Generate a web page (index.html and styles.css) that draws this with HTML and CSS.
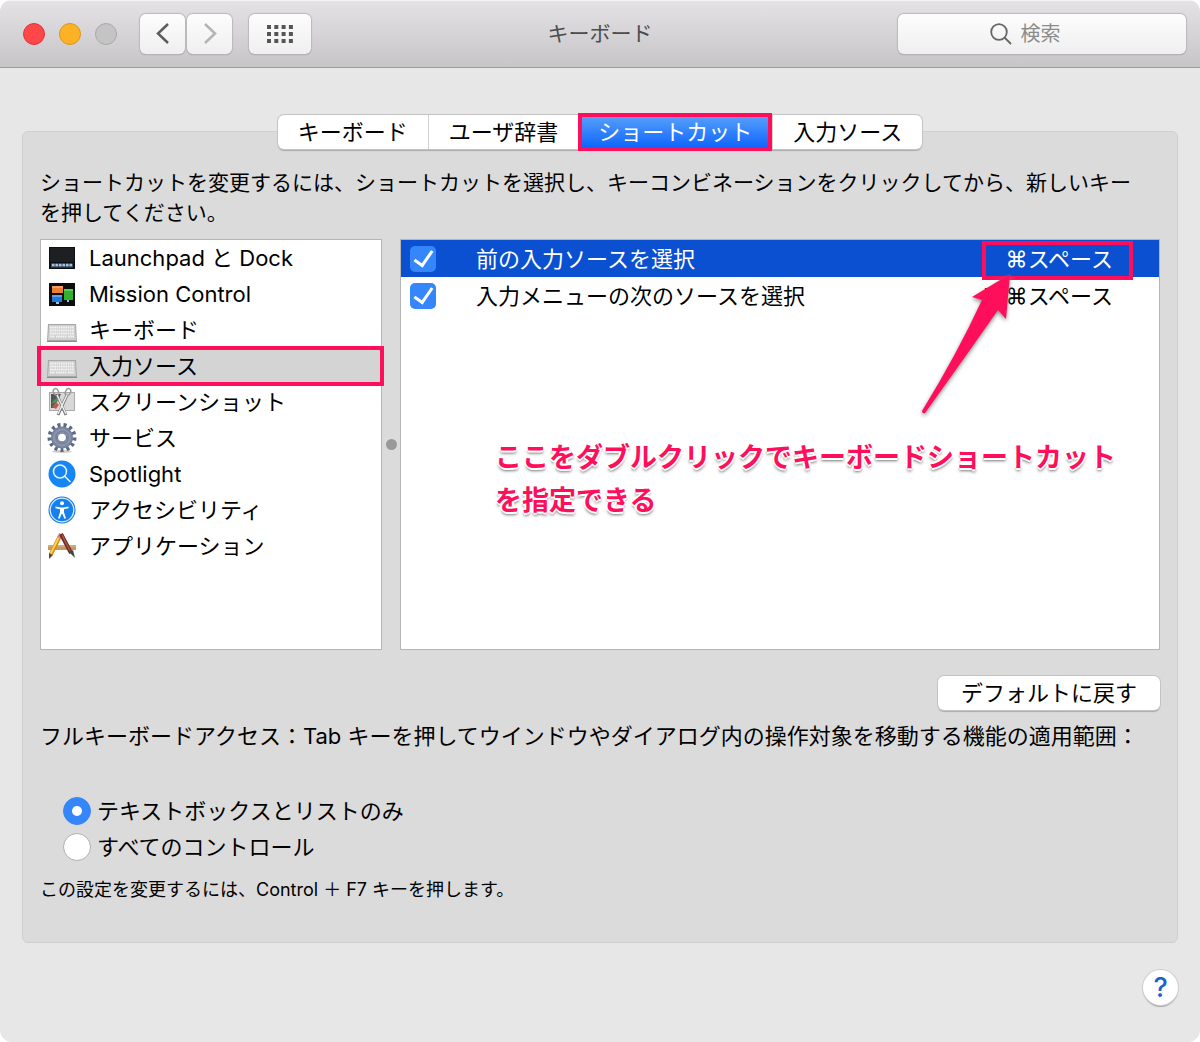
FILE: index.html
```html
<!DOCTYPE html>
<html lang="ja">
  <head>
    <meta charset="utf-8">
    <title>キーボード</title>
    <link rel="stylesheet" href="styles.css">
  </head>
  <body>
    <div class="window">
      <header class="toolbar">
        <div class="toolbar-left">
          <div class="lights">
            <button class="light red" aria-label="閉じる"></button>
            <button class="light yellow" aria-label="しまう"></button>
            <button class="light" aria-label="拡大" disabled></button>
          </div>
          <div class="nav">
            <button class="tool-btn" aria-label="戻る">
              <svg width="16" height="24" viewBox="0 0 16 24"><path d="M13 2 L3 11.500 L13 21" fill="none" stroke="#5c5c5c" stroke-width="2.500"/></svg>
            </button>
            <button class="tool-btn" aria-label="進む">
              <svg width="16" height="24" viewBox="0 0 16 24"><path d="M3 2 L13 11.500 L3 21" fill="none" stroke="#b4b4b4" stroke-width="2.500"/></svg>
            </button>
          </div>
          <button class="tool-btn grid-btn" aria-label="すべてを表示">
            <svg width="26" height="20" viewBox="0 0 26 20"><path d="M0 3h26M0 10h26M0 17h26" stroke="#555" stroke-width="4" stroke-dasharray="4 3.300"/></svg>
          </button>
        </div>
        <h1>キーボード</h1>
        <label class="search">
          <svg width="22" height="22" viewBox="0 0 22 22"><g fill="none" stroke="#666" stroke-width="1.800"><circle cx="9" cy="9" r="7.800"/><path d="M14.500 14.500 L21 21"/></g></svg>
          <input type="text" placeholder="検索" aria-label="検索">
        </label>
      </header>

      <main>
        <nav class="tabs">
          <button class="tab">キーボード</button>
          <button class="tab">ユーザ辞書</button>
          <button class="tab active marked">ショートカット</button>
          <button class="tab">入力ソース</button>
        </nav>

        <section class="panel">
          <p class="text">ショートカットを変更するには、ショートカットを選択し、キーコンビネーションをクリックしてから、新しいキー<br>を押してください。</p>

          <div class="panes">
            <ul class="pane categories">
              <li><button class="category">
                <svg class="icon" viewBox="0 0 30 30"><rect x="2" y="4" width="26" height="22" fill="#0d1116"/><rect x="3" y="5" width="24" height="14" fill="#1d1f22"/><path d="M4 22.500h22" stroke="#3c5166" stroke-width="4"/><path d="M5 22h20" stroke="#a3c4dc" stroke-width="2.500" stroke-dasharray="2.500 1"/></svg>
                Launchpad と Dock</button></li>
              <li><button class="category">
                <svg class="icon" viewBox="0 0 30 30"><rect x="2" y="4" width="26" height="23" fill="#0b0d0f"/><rect x="5" y="7" width="11" height="7" fill="#f07b32"/><path d="M5 8h11" stroke="#ffc09a"/><rect x="5" y="16" width="10" height="7" fill="#2478da"/><path d="M5 17h10" stroke="#9dcaf5"/><rect x="17" y="10" width="9" height="11" fill="#2fb22d"/><path d="M17 11h9" stroke="#8be787"/><path d="M9 23h3v2h-3zM20 21h2v2h-2z" fill="#8fc4e8"/></svg>
                Mission Control</button></li>
              <li><button class="category">
                <svg class="icon" viewBox="0 0 30 30"><path d="M1 9h28l1 18H0z" fill="#a6a6a6"/><path d="M2 10h26l1 15H1z" fill="#cfcfcf"/><path d="M3 12.500h24M3 15.500h24M3 18.500h24M3 21.500h5m1 0h11m1 0h6" stroke="#f4f4f4" stroke-width="2" stroke-dasharray="1.600 .6"/><path d="M0 26.500h30" stroke="#8c8c8c"/></svg>
                キーボード</button></li>
              <li><button class="category selected marked">
                <svg class="icon" viewBox="0 0 30 30"><path d="M1 9h28l1 18H0z" fill="#a6a6a6"/><path d="M2 10h26l1 15H1z" fill="#cfcfcf"/><path d="M3 12.500h24M3 15.500h24M3 18.500h24M3 21.500h5m1 0h11m1 0h6" stroke="#f4f4f4" stroke-width="2" stroke-dasharray="1.600 .6"/><path d="M0 26.500h30" stroke="#8c8c8c"/></svg>
                入力ソース</button></li>
              <li><button class="category">
                <svg class="icon" viewBox="0 0 30 30"><rect x="2.500" y="5.500" width="25" height="18" fill="#d8d8d8" stroke="#aaa"/><path d="M4 7h10L7 21H4z" fill="#555"/><path d="M4 17q4-7 9-6l-4 4z" fill="#4c9a58"/><path d="M5 20l4-5 3 3-3 4z" fill="#bd5c4e"/><g fill="none" stroke="#999" stroke-width="1.500"><ellipse cx="9" cy="5" rx="2.500" ry="3.500" transform="rotate(-25 9 5)"/><ellipse cx="21" cy="5" rx="2.500" ry="3.500" transform="rotate(25 21 5)"/></g><path d="M10 8l9 20M20 8l-9 20" stroke="#777" stroke-width="3"/><path d="M10 8l9 19M20 8l-9 19" stroke="#eee" stroke-width="1.500"/></svg>
                スクリーンショット</button></li>
              <li><button class="category">
                <svg class="icon" viewBox="0 0 30 30"><ellipse cx="15" cy="28.500" rx="10" ry="1.500" fill="#ccc"/><circle cx="15" cy="14.500" r="12" fill="none" stroke="#5c6885" stroke-width="5" pathLength="130" stroke-dasharray="5 5"/><circle cx="15" cy="14.500" r="8" fill="none" stroke="#77839e" stroke-width="6"/><circle cx="15" cy="14.500" r="8" fill="none" stroke="#8b95ad" stroke-width="2"/><circle cx="15" cy="14.500" r="4.500" fill="#fff" stroke="#4c5770"/></svg>
                サービス</button></li>
              <li><button class="category">
                <svg class="icon" viewBox="0 0 30 30"><circle cx="15" cy="15" r="13.500" fill="#1686f5"/><g fill="none" stroke="#e4f4ff" stroke-width="1.500"><circle cx="13" cy="12.500" r="6.500"/><path d="M17.500 17l6 6"/></g></svg>
                Spotlight</button></li>
              <li><button class="category">
                <svg class="icon" viewBox="0 0 30 30"><circle cx="15" cy="15" r="13.500" fill="#1675e0"/><circle cx="15" cy="15" r="11.800" fill="#1581ed" stroke="#d5efff" stroke-width="1.300"/><circle cx="15" cy="8.300" r="2" fill="#fff"/><path d="M8.500 11.500l5 1h3l5-1v1.700l-4.500 1v3l2 6-1.600.6-2.100-5h-.6l-2.100 5-1.600-.6 2-6v-3l-4.500-1z" fill="#fff"/></svg>
                アクセシビリティ</button></li>
              <li><button class="category">
                <svg class="icon" viewBox="0 0 30 30"><rect x="1" y="14" width="28" height="5" fill="#c39a63"/><path d="M1 15h28" stroke="#e0be8e"/><path d="M13 5L4 23" stroke="#d28b14" stroke-width="4"/><path d="M12.500 5L3.500 23" stroke="#ffd04b" stroke-width="2"/><path d="M14 3l-2 4" stroke="#dd7f88" stroke-width="4"/><path d="M2 22l4 2-4 4z" fill="#5c4430"/><path d="M14 3l10 19" stroke="#692c22" stroke-width="4"/><path d="M15 4l8 16" stroke="#b35542" stroke-width="1.500"/><path d="M22 21l4-2 2 8z" fill="#444"/></svg>
                アプリケーション</button></li>
            </ul>

            <div class="divider"></div>

            <div class="pane shortcuts">
              <table>
                <tr class="current">
                  <td class="check"><input type="checkbox" id="prev" checked></td>
                  <td><label for="prev">前の入力ソースを選択</label></td>
                  <td class="keys"><span class="key-box marked">⌘スペース</span></td>
                </tr>
                <tr>
                  <td class="check"><input type="checkbox" id="next" checked></td>
                  <td><label for="next">入力メニューの次のソースを選択</label></td>
                  <td class="keys"><span class="key-box">⌥⌘スペース</span></td>
                </tr>
              </table>
              <p class="note">ここをダブルクリックでキーボードショートカット<br>を指定できる</p>
              <svg class="arrow" width="100" height="150" viewBox="0 0 100 150"><path d="M95 4 L57 27 L67 30 Q42 84 7 141 Q7 144 10 143 Q40 101 57 77 L83 40 L91 49 Z" fill="#ff0f5b"/></svg>
            </div>
          </div>

          <div class="actions">
            <button class="push-btn">デフォルトに戻す</button>
          </div>

          <fieldset>
            <legend>フルキーボードアクセス：Tab キーを押してウインドウやダイアログ内の操作対象を移動する機能の適用範囲：</legend>
            <label class="option"><input type="radio" name="access" checked>テキストボックスとリストのみ</label>
            <label class="option"><input type="radio" name="access">すべてのコントロール</label>
          </fieldset>
          <p class="hint">この設定を変更するには、Control ＋ F7 キーを押します。</p>
        </section>

        <div class="footer">
          <button class="help" aria-label="ヘルプ">?</button>
        </div>
      </main>
    </div>
  </body>
</html>
```
FILE: styles.css
```css
*{
  box-sizing: border-box;
}
body{
  margin: 0;
  background: #fff;
  color: #000;
  font-family: Inter, "Noto Sans CJK JP", sans-serif;
  font-size: 22px;
  line-height: 34px;
}
button, input{
  font: inherit;
  color: inherit;
  margin: 0;
}
button{
  border: none;
  padding: 0;
}
h1, p, ul{
  margin: 0;
  padding: 0;
}
svg{
  display: block;
}
.window{
  min-height: 100vh;
  background: #e7e7e7;
  border-radius: 12px;
  overflow: hidden;
}

/* toolbar */
.toolbar{
  display: grid;
  grid-template-columns: 1fr auto 1fr;
  align-items: center;
  height: 68px;
  padding: 0 14px;
  background: linear-gradient(#e4e2e5, #c8c5c9);
  border-top: 1px solid #f3f2f3;
  border-bottom: 1px solid #9d9a9e;
}
.toolbar-left{
  display: flex;
  align-items: center;
}
.lights{
  display: flex;
  gap: 14px;
  margin: 0 23px 0 9px;
}
.light{
  width: 22px;
  height: 22px;
  border-radius: 50%;
  background: #c4c4c4;
  border: 1px solid #a9a9a9;
}
.light.red{
  background: #fc4848;
  border-color: #df3538;
}
.light.yellow{
  background: #fdb226;
  border-color: #db951c;
}
.nav{
  display: flex;
  gap: 2px;
  margin-right: 17px;
}
.tool-btn, .search{
  display: flex;
  align-items: center;
  justify-content: center;
  height: 40px;
  border-radius: 6px;
  background: linear-gradient(#fdfdfd, #efefef);
  box-shadow: 0 0 1px 1px #bbb8bc, 0 1px 1px #8f8c90;
}
.tool-btn{
  width: 45px;
}
.grid-btn{
  width: 62px;
}
h1{
  color: #4c4c4c;
  font-size: 21px;
  font-weight: 400;
}
.search{
  justify-self: end;
  width: 288px;
  gap: 9px;
  padding-right: 32px;
}
.search input{
  width: 42px;
  height: 34px;
  padding: 0;
  border: none;
  outline: none;
  background: none;
  font-size: 20px;
}
.search input::placeholder{
  color: #8b8b8b;
  opacity: 1;
}

/* red frame over an element */
.marked{
  position: relative;
}
.marked::after{
  content: "";
  position: absolute;
  inset: -2px 0;
  border: 4px solid #ff0f5b;
}

main{
  padding: 47px 22px 36px;
}
.tabs{
  position: relative;
  display: flex;
  width: fit-content;
  margin: 0 auto -18px;
  border-radius: 6px;
  background: #fff;
  box-shadow: 0 0 0 1px #c3c3c3, 0 2px 1px #aaa;
}
.tab{
  height: 34px;
  padding: 0 20px;
  background: none;
}
.tab + .tab{
  border-left: 1px solid #d0d0d0;
}
.tab.active{
  border: none;
  background: linear-gradient(#5aa2fb, #0b62fd);
  color: #fff;
}
.panel{
  padding: 36px 17px 37px;
  background: #dbdbdb;
  border: 1px solid #cfcfcf;
  border-radius: 6px;
}
.text{
  font-size: 21px;
  line-height: 30px;
}

/* lists */
.panes{
  display: grid;
  grid-template-columns: 342fr 18px 760fr;
  margin-top: 11px;
  min-height: 411px;
}
.pane{
  background: #fff;
  border: 1px solid #b5b5b5;
}
.categories{
  list-style: none;
}
.category{
  display: flex;
  align-items: center;
  gap: 12px;
  width: 100%;
  height: 36px;
  padding: 0 6px;
  background: none;
}
.category.selected{
  background: #d4d4d4;
}
.category.marked::after{
  inset: -2px -3px -2px -4px;
}
.icon{
  width: 30px;
  height: 30px;
}
.divider{
  align-self: center;
  justify-self: center;
  width: 11px;
  height: 11px;
  border-radius: 50%;
  background: #999;
}
.shortcuts{
  position: relative;
}
table{
  width: 100%;
  border-collapse: collapse;
}
td{
  height: 37px;
  padding: 0;
  line-height: 36px;
}
.current{
  background: #0a50d0;
  color: #fff;
}
.check{
  width: 75px;
  padding-left: 9px;
}
.keys{
  text-align: right;
  padding-right: 26px;
}
.key-box{
  display: inline-block;
  padding: 0 20px;
}
.key-box.marked::after{
  inset: 0 0 -3px -4px;
}
input[type="checkbox"], input[type="radio"]{
  appearance: none;
  flex: none;
  display: grid;
  place-items: center;
}
input[type="checkbox"]{
  width: 26px;
  height: 26px;
  border-radius: 5px;
  background: #3586fb;
}
input[type="checkbox"]:checked::before{
  content: "";
  width: 8px;
  height: 16px;
  margin-bottom: 4px;
  border: solid #fff;
  border-width: 0 3px 3px 0;
  transform: rotate(35deg);
}
.note{
  margin: 122px 0 0 94px;
  color: #ff0f5b;
  font-size: 27px;
  font-weight: 700;
  line-height: 43px;
  text-shadow: 2px 0 #fff, -2px 0 #fff, 0 2px #fff, 0 -2px #fff, 0 3px 3px #777;
}
.arrow{
  position: absolute;
  top: 30px;
  right: 144px;
  filter: drop-shadow(0 2px 2px #888);
}

.actions{
  display: flex;
  justify-content: flex-end;
  margin-top: 26px;
}
.push-btn{
  height: 34px;
  padding: 0 23px;
  border-radius: 6px;
  background: #fff;
  box-shadow: 0 0 0 1px #c3c3c3, 0 2px 1px #aaa;
}
fieldset{
  border: none;
  margin: 9px 0 0;
  padding: 0;
}
legend{
  margin-bottom: 40px;
  padding: 0;
}
.option{
  display: flex;
  align-items: center;
  gap: 6px;
  height: 36px;
  margin-left: 23px;
}
input[type="radio"]{
  width: 28px;
  height: 28px;
  border-radius: 50%;
  background: #fff;
  border: 1px solid #b0b0b0;
}
input[type="radio"]:checked{
  background: #3586fb;
  border-color: #3586fb;
}
input[type="radio"]:checked::before{
  content: "";
  width: 10px;
  height: 10px;
  border-radius: 50%;
  background: #fff;
}
.hint{
  margin-top: 10px;
  font-size: 18px;
  line-height: 30px;
}
.footer{
  display: flex;
  justify-content: flex-end;
  margin-top: 27px;
}
.help{
  width: 35px;
  height: 35px;
  border-radius: 50%;
  background: #fff;
  box-shadow: 0 0 0 1px #ccc, 0 2px 1px #aaa;
  color: #1762cf;
  font-size: 27px;
  font-weight: 500;
}
```
